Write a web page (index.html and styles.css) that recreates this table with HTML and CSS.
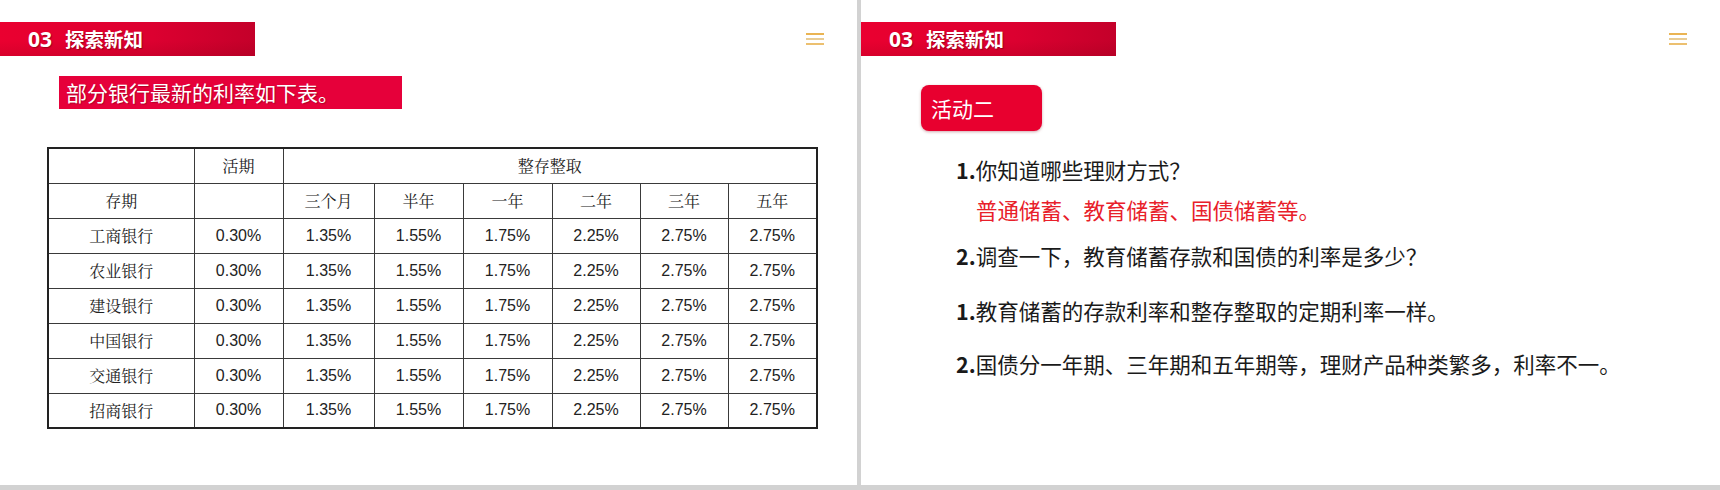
FILE: index.html
```html
<!DOCTYPE html>
<html lang="zh-CN">
<head>
<meta charset="utf-8">
<title>探索新知</title>
<link rel="stylesheet" href="styles.css">
</head>
<body>
<div class="deck">
  <section class="slide slide-left">
    <div class="head-row">
      <div class="sec-bar"><span class="sec-num">03</span><span class="sec-title">探索新知</span></div>
      <div class="burger"><i></i><i></i><i></i></div>
    </div>
    <div class="subtitle">部分银行最新的利率如下表。</div>
    <table class="rates">
      <colgroup>
        <col class="c-bank"><col class="c-cur"><col class="c-a"><col class="c-b"><col class="c-c"><col class="c-d"><col class="c-e"><col class="c-f">
      </colgroup>
      <tr><td></td><td>活期</td><td colspan="6">整存整取</td></tr>
      <tr><td>存期</td><td></td><td>三个月</td><td>半年</td><td>一年</td><td>二年</td><td>三年</td><td>五年</td></tr>
      <tr><td>工商银行</td><td>0.30%</td><td>1.35%</td><td>1.55%</td><td>1.75%</td><td>2.25%</td><td>2.75%</td><td>2.75%</td></tr>
      <tr><td>农业银行</td><td>0.30%</td><td>1.35%</td><td>1.55%</td><td>1.75%</td><td>2.25%</td><td>2.75%</td><td>2.75%</td></tr>
      <tr><td>建设银行</td><td>0.30%</td><td>1.35%</td><td>1.55%</td><td>1.75%</td><td>2.25%</td><td>2.75%</td><td>2.75%</td></tr>
      <tr><td>中国银行</td><td>0.30%</td><td>1.35%</td><td>1.55%</td><td>1.75%</td><td>2.25%</td><td>2.75%</td><td>2.75%</td></tr>
      <tr><td>交通银行</td><td>0.30%</td><td>1.35%</td><td>1.55%</td><td>1.75%</td><td>2.25%</td><td>2.75%</td><td>2.75%</td></tr>
      <tr><td>招商银行</td><td>0.30%</td><td>1.35%</td><td>1.55%</td><td>1.75%</td><td>2.25%</td><td>2.75%</td><td>2.75%</td></tr>
    </table>
  </section>
  <section class="slide slide-right">
    <div class="head-row">
      <div class="sec-bar"><span class="sec-num">03</span><span class="sec-title">探索新知</span></div>
      <div class="burger"><i></i><i></i><i></i></div>
    </div>
    <div class="activity">活动二</div>
    <div class="qa">
      <p class="line l1"><b>1.</b>你知道哪些理财方式？</p>
      <p class="line answer">普通储蓄、教育储蓄、国债储蓄等。</p>
      <p class="line l2"><b>2.</b>调查一下，教育储蓄存款和国债的利率是多少？</p>
      <p class="line l3"><b>1.</b>教育储蓄的存款利率和整存整取的定期利率一样。</p>
      <p class="line l4"><b>2.</b>国债分一年期、三年期和五年期等，理财产品种类繁多，利率不一。</p>
    </div>
  </section>
</div>
</body>
</html>
```

FILE: styles.css
```css
* { box-sizing: border-box; }
html, body {
  margin: 0;
  padding: 0;
  background: #d2d2d2;
}
body {
  width: 1720px;
  height: 490px;
  overflow: hidden;
  font-family: "Noto Sans CJK SC", "Noto Sans", sans-serif;
}
.deck {
  display: flex;
  gap: 4px;
  height: 485px;
}
.slide {
  background: #fff;
  height: 485px;
  display: flex;
  flex-direction: column;
  align-items: flex-start;
}
.slide-left { width: 857px; }
.slide-right { width: 859px; }

.head-row {
  margin-top: 22px;
  width: 100%;
  display: flex;
  align-items: center;
  padding-right: 33px;
}
.sec-bar {
  width: 255px;
  height: 34px;
  background: linear-gradient(180deg, rgba(255,255,255,0) 55%, rgba(90,0,10,0.12) 100%), linear-gradient(90deg, #ea0030 0%, #dc0030 60%, #c4002a 100%);
  display: flex;
  align-items: center;
  padding-left: 28px;
  color: #fff;
  text-shadow: 1px 1px 1px rgba(80,0,0,0.45);
}
.sec-num {
  font-family: "Noto Sans", "Open Sans", sans-serif;
  font-weight: 700;
  font-size: 21px;
  line-height: 34px;
  margin-right: 13px;
}
.sec-title {
  font-weight: 700;
  font-size: 19.5px;
  line-height: 34px;
}
.burger {
  margin-left: auto;
  width: 18px;
  display: flex;
  flex-direction: column;
  gap: 3.5px;
}
.burger i {
  display: block;
  height: 1.5px;
  background: #eab453;
}
.burger i:nth-child(2) { background: #e8cc94; }
.burger i:nth-child(3) { background: #ecc070; }

.subtitle {
  margin-left: 59px;
  margin-top: 20px;
  width: 343px;
  height: 33px;
  background: #e6003a;
  color: #fff;
  font-size: 21px;
  line-height: 33px;
  padding-left: 7px;
  text-shadow: 1px 1px 1px rgba(80,0,0,0.35);
}

.rates {
  margin-left: 47px;
  margin-top: 38px;
  border-collapse: collapse;
  border: 2px solid #222;
  table-layout: fixed;
  width: 770px;
  font-family: "Liberation Sans", "Noto Serif CJK SC", "Noto Sans CJK SC", sans-serif;
  font-size: 16px;
  color: #222;
}
.rates td {
  border: 1px solid #3a3a3a;
  height: 35px;
  padding: 0;
  text-align: center;
  vertical-align: middle;
}
.c-bank { width: 146px; }
.c-cur { width: 89px; }
.c-a { width: 91px; }
.c-b { width: 89px; }
.c-c { width: 89px; }
.c-d { width: 88px; }
.c-e { width: 88px; }
.c-f { width: 89px; }

.activity {
  margin-left: 60px;
  margin-top: 29px;
  width: 121px;
  height: 46px;
  background: #e8002f;
  border-radius: 8px;
  box-shadow: 0 1px 3px rgba(120,0,20,0.35);
  color: #fff;
  font-size: 21px;
  line-height: 46px;
  padding-left: 10px;
}
.qa {
  margin-left: 95px;
  margin-top: 24px;
  display: flex;
  flex-direction: column;
}
.line {
  margin: 0;
  font-size: 21.5px;
  line-height: 30px;
  color: #1a1a1a;
  white-space: nowrap;
}
.line b { font-weight: 700; }
.answer {
  color: #e8202a;
  margin-top: 10px;
  margin-left: 20px;
  font-size: 21.5px;
}
.l2 { margin-top: 16px; }
.l3 { margin-top: 25px; }
.l4 { margin-top: 23px; }
```
